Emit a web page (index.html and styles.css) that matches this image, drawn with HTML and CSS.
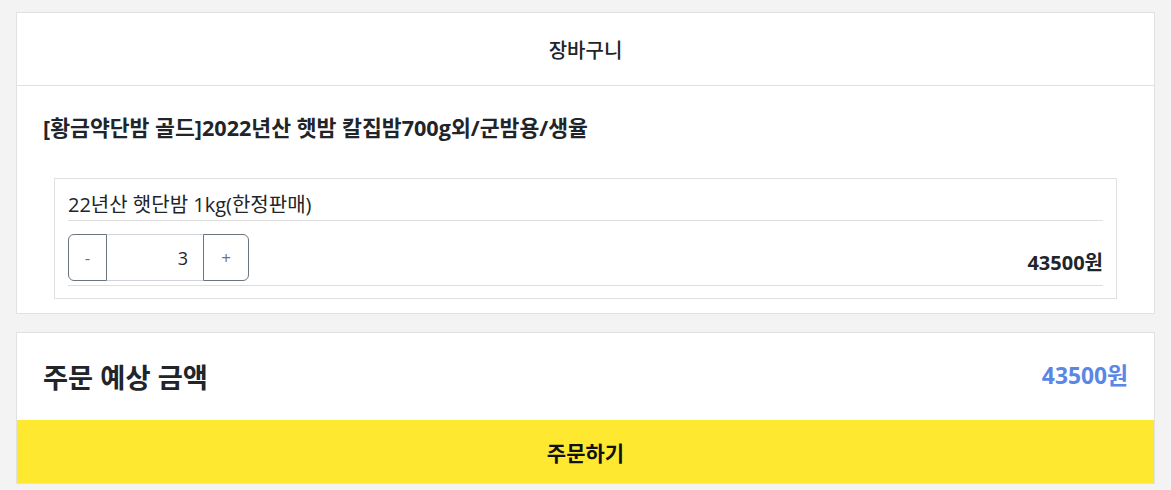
FILE: index.html
```html
<!DOCTYPE html>
<html lang="ko">
<head>
<meta charset="utf-8">
<title>장바구니</title>
<link rel="stylesheet" href="styles.css">
</head>
<body>
<div class="page">
  <section class="card cart">
    <header class="cart-header">장바구니</header>
    <div class="cart-body">
      <h2 class="product-title">[황금약단밤 골드]2022년산 햇밤 칼집밤700g외/군밤용/생율</h2>
      <div class="option-box">
        <div class="option-name">22년산 햇단밤 1kg(한정판매)</div>
        <div class="option-row">
          <div class="qty">
            <button class="qty-btn minus" type="button">-</button>
            <input class="qty-input" type="text" value="3">
            <button class="qty-btn plus" type="button">+</button>
          </div>
          <div class="option-price">43500원</div>
        </div>
      </div>
    </div>
  </section>
  <section class="card summary">
    <div class="summary-row">
      <div class="summary-label">주문 예상 금액</div>
      <div class="summary-price">43500원</div>
    </div>
    <button class="order-btn" type="button">주문하기</button>
  </section>
</div>
</body>
</html>
```
FILE: styles.css
```css
* { box-sizing: border-box; }
html, body { margin: 0; padding: 0; }
body {
  background: #f3f3f3;
  font-family: "Open Sans", "Noto Sans CJK KR", sans-serif;
  color: #212529;
}
.page {
  padding: 12px 16px 0 16px;
  display: flex;
  flex-direction: column;
  gap: 18px;
}
.card {
  background: #fff;
  border: 1px solid #e1e1e1;
}
.cart-header {
  height: 73px;
  display: flex;
  align-items: center;
  justify-content: center;
  font-size: 20px;
  font-weight: 500;
  border-bottom: 1px solid #e1e1e1;
}
.cart-body {
  padding: 24px 26px 14px 26px;
}
.product-title {
  margin: 0 0 32px 0;
  font-size: 21.6px;
  font-weight: 700;
  line-height: 36px;
}
.option-box {
  margin: 0 11px;
  border: 1px solid #e1e1e1;
  padding: 10px 13px 12px 13px;
}
.option-name {
  font-size: 20px;
  line-height: 31px;
  border-bottom: 1px solid #dedede;
}
.option-row {
  display: flex;
  align-items: flex-end;
  justify-content: space-between;
  padding: 13px 0 4px 0;
  border-bottom: 1px solid #dedede;
}
.qty {
  display: flex;
  height: 47px;
}
.qty-btn {
  background: #fff;
  border: 1px solid #6c757d;
  color: #6c757d;
  font-family: inherit;
  font-size: 17px;
  padding: 0;
  cursor: pointer;
}
.minus {
  width: 39px;
  border-radius: 6px 0 0 6px;
}
.plus {
  width: 46px;
  border-radius: 0 6px 6px 0;
}
.qty-input {
  width: 96px;
  border: 1px solid #ced4da;
  border-left: none;
  border-right: none;
  text-align: right;
  padding: 0 15px;
  font-family: inherit;
  font-size: 18px;
  color: #212529;
  outline: none;
}
.option-price {
  font-size: 20px;
  font-weight: 700;
  line-height: 30px;
  padding-bottom: 3px;
}
.summary-row {
  height: 87px;
  display: flex;
  align-items: center;
  justify-content: space-between;
  padding: 0 26px;
}
.summary-label {
  font-size: 27.3px;
  font-weight: 700;
  padding-bottom: 2px;
}
.summary-price {
  font-size: 22.8px;
  font-weight: 700;
  color: #5a86e6;
  padding-bottom: 4px;
}
.order-btn {
  display: block;
  width: 100%;
  height: 63px;
  background: #ffe930;
  border: none;
  font-family: inherit;
  font-size: 21px;
  font-weight: 700;
  color: #111;
  padding: 0;
}
```
